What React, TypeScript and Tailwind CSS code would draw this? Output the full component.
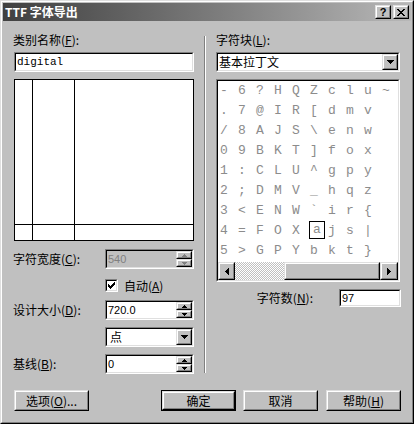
import React from "react";

const CJK = "font-['Noto_Sans_CJK_SC','Noto_Sans',sans-serif]";
const NUM = "font-['Liberation_Sans',Arial,sans-serif]";
const MONO = "font-['Liberation_Mono',monospace]";

function Pix({ rows, color = "#000" }: { rows: string[]; color?: string }) {
  const w = rows[0].length;
  const h = rows.length;
  return (
    <svg width={w} height={h} shapeRendering="crispEdges" className="block">
      {rows.flatMap((r, y) =>
        r.split("").map((c, x) =>
          c === "X" ? <rect key={`${x}-${y}`} x={x} y={y} width={1} height={1} fill={color} /> : null
        )
      )}
    </svg>
  );
}

const UP = ["..X..", ".XXX.", "XXXXX"];
const DOWN = ["XXXXX", ".XXX.", "..X.."];
const DDOWN = ["XXXXXXX", ".XXXXX.", "..XXX..", "...X..."];
const LEFT = ["...X", "..XX", ".XXX", "XXXX", ".XXX", "..XX", "...X"];
const RIGHT = ["X...", "XX..", "XXX.", "XXXX", "XXX.", "XX..", "X..."];
const CHECK = [
  "......X",
  ".....XX",
  "X...XXX",
  "XX.XXX.",
  "XXXXX..",
  ".XXX...",
  "..X....",
];
const CLOSE = [
  "XX....XX",
  ".XX..XX.",
  "..XXXX..",
  "...XX...",
  "..XXXX..",
  ".XX..XX.",
  "XX....XX",
];

function Sunken({
  className = "",
  inner = "",
  children,
}: {
  className?: string;
  inner?: string;
  children?: React.ReactNode;
}) {
  return (
    <div
      className={`border border-t-[#808080] border-l-[#808080] border-b-white border-r-white ${className}`}
    >
      <div
        className={`h-full w-full border border-t-black border-l-black border-b-[#dfdfdf] border-r-[#dfdfdf] ${inner}`}
      >
        {children}
      </div>
    </div>
  );
}

function Raised({
  className = "",
  children,
}: {
  className?: string;
  children?: React.ReactNode;
}) {
  return (
    <div
      className={`border border-t-[#dfdfdf] border-l-[#dfdfdf] border-b-black border-r-black bg-[#c0c0c0] ${className}`}
    >
      <div className="flex h-full w-full items-center justify-center border border-t-white border-l-white border-b-[#808080] border-r-[#808080]">
        {children}
      </div>
    </div>
  );
}

function Spin({ disabled = false }: { disabled?: boolean }) {
  const c = disabled ? "#808080" : "#000";
  return (
    <div className="flex h-full w-[16px] shrink-0 flex-col">
      <Raised className="h-[8px] w-full">
        <Pix rows={UP} color={c} />
      </Raised>
      <Raised className="h-[8px] w-full">
        <Pix rows={DOWN} color={c} />
      </Raised>
    </div>
  );
}

function Label({ children, className = "" }: { children: React.ReactNode; className?: string }) {
  return <div className={`whitespace-nowrap text-[12px] leading-[14px] text-black ${className}`}>{children}</div>;
}

function Btn({
  children,
  className = "",
  def = false,
}: {
  children: React.ReactNode;
  className?: string;
  def?: boolean;
}) {
  if (def) {
    return (
      <div className={`h-[21px] w-[75px] border border-black ${className}`}>
        <Raised className="h-full w-full">
          <span className="text-[12px] leading-[14px]">{children}</span>
        </Raised>
      </div>
    );
  }
  return (
    <Raised className={`h-[21px] w-[75px] ${className}`}>
      <span className="text-[12px] leading-[14px]">{children}</span>
    </Raised>
  );
}

const COLS = [
  "-./012345",
  "6789:;<=>",
  "?@ABCDEFG",
  "HIJKLMNOP",
  "QRSTUVWXY",
  "Z[\\]^_`ab",
  "cdefghijk",
  "lmnopqrst",
  "uvwxyz{|}",
  "~",
];

export default function App() {
  const cells: React.ReactNode[] = [];
  for (let c = 0; c < 10; c++) {
    for (let r = 0; r < 9; r++) {
      const ch = COLS[c][r] ?? "";
      const sel = c === 5 && r === 7;
      cells.push(
        <div key={`${c}-${r}`} className="relative h-[20px] w-[18px]">
          {sel ? (
            <div className="flex h-[18px] w-[16px] items-center justify-center border border-black">
              <span className={`${MONO} text-[13px] leading-[16px] text-[#8c8c8c]`}>{ch}</span>
            </div>
          ) : (
            <div className={`flex h-[20px] items-center pl-[1px] ${MONO} text-[13px] leading-[20px] text-[#8c8c8c]`}>
              {ch}
            </div>
          )}
        </div>
      );
    }
  }

  return (
    <div className={`h-[424px] w-[414px] ${CJK}`}>
      <div className="h-[424px] w-[414px] border border-t-[#dfdfdf] border-l-[#dfdfdf] border-b-black border-r-black bg-[#c0c0c0]">
        <div className="flex h-full w-full flex-col border border-t-white border-l-white border-b-[#808080] border-r-[#808080] p-px">
          {/* Title bar */}
          <div className="flex h-[18px] w-full shrink-0 items-center bg-gradient-to-r from-[#404040] to-[#b8b8b8] pl-[2px] pr-[2px]">
            <span className="text-[12px] font-bold leading-[14px] text-white">TTF 字体导出</span>
            <div className="ml-auto flex items-center">
              <Raised className="h-[14px] w-[16px]">
                <span className={`${NUM} text-[11px] font-bold leading-[10px] text-black`}>?</span>
              </Raised>
              <Raised className="ml-[2px] h-[14px] w-[16px]">
                <Pix rows={CLOSE} />
              </Raised>
            </div>
          </div>

          {/* Body */}
          <div className="flex pl-[11px]">
            {/* Left column */}
            <div className="flex w-[180px] flex-col">
              <Label className="-ml-px mt-[12px] h-[14px]">
                类别名称(<u>F</u>):
              </Label>
              <Sunken className="mt-[5px] h-[20px] w-[180px]" inner="flex items-center bg-white pl-[1px]">
                <span className={`${MONO} text-[11px] leading-[14px] text-black`}>digital</span>
              </Sunken>
              <div className="mt-[7px] h-[162px] w-[180px] border border-black bg-white">
                <svg width="178" height="160" shapeRendering="crispEdges" className="block">
                  <rect x={17} y={0} width={1} height={160} fill="#000" />
                  <rect x={59} y={0} width={1} height={160} fill="#000" />
                  <rect x={0} y={144} width={178} height={1} fill="#000" />
                </svg>
              </div>

              <div className="mt-[8px] flex h-[20px] items-center">
                <Label className="-ml-px w-[92px]">
                  字符宽度(<u>C</u>):
                </Label>
                <Sunken className="h-[20px] w-[89px]" inner="flex bg-[#c0c0c0]">
                  <div className={`flex flex-1 items-center pl-[1px] ${NUM} text-[11px] text-[#808080]`}>540</div>
                  <Spin disabled />
                </Sunken>
              </div>

              <div className="mt-[10px] flex h-[13px] items-center pl-[91px]">
                <Sunken className="h-[13px] w-[13px]" inner="flex items-center justify-center bg-white">
                  <Pix rows={CHECK} />
                </Sunken>
                <Label className="ml-[6px]">
                  自动(<u>A</u>)
                </Label>
              </div>

              <div className="mt-[8px] flex h-[20px] items-center">
                <Label className="-ml-px w-[92px]">
                  设计大小(<u>D</u>):
                </Label>
                <Sunken className="h-[20px] w-[89px]" inner="flex bg-white">
                  <div className={`flex flex-1 items-center pl-[1px] ${NUM} text-[11px] text-black`}>720.0</div>
                  <Spin />
                </Sunken>
              </div>

              <div className="mt-[7px] flex h-[20px] items-center pl-[91px]">
                <Sunken className="h-[20px] w-[89px]" inner="flex items-center bg-white">
                  <div className="flex-1 pl-[3px] text-[12px] leading-[14px] text-black">点</div>
                  <Raised className="h-[16px] w-[16px]">
                    <Pix rows={DDOWN} />
                  </Raised>
                </Sunken>
              </div>

              <div className="mt-[7px] flex h-[20px] items-center">
                <Label className="-ml-px w-[92px]">
                  基线(<u>B</u>):
                </Label>
                <Sunken className="h-[20px] w-[89px]" inner="flex bg-white">
                  <div className={`flex flex-1 items-center pl-[1px] ${NUM} text-[11px] text-black`}>0</div>
                  <Spin />
                </Sunken>
              </div>
            </div>

            {/* Separator */}
            <div className="ml-[10px] mt-[15px] flex h-[337px] w-[2px]">
              <div className="h-full w-px bg-[#808080]" />
              <div className="h-full w-px bg-white" />
            </div>

            {/* Right column */}
            <div className="ml-[10px] flex w-[185px] flex-col">
              <Label className="mt-[12px] h-[14px]">
                字符块(<u>L</u>):
              </Label>
              <Sunken className="mt-[5px] h-[20px] w-[184px]" inner="flex items-center bg-white">
                <div className="flex-1 pl-[1px] text-[12px] leading-[14px] text-black">基本拉丁文</div>
                <Raised className="h-[16px] w-[16px]">
                  <Pix rows={DDOWN} />
                </Raised>
              </Sunken>

              <Sunken className="mt-[7px] h-[203px] w-[184px]" inner="flex flex-col bg-white">
                <div className="grid h-[181px] grid-flow-col grid-cols-[repeat(10,18px)] grid-rows-[repeat(9,20px)] pl-[1px]">
                  {cells}
                </div>
                <div className="flex h-[18px]">
                  <Raised className="h-[18px] w-[17px]">
                    <Pix rows={LEFT} />
                  </Raised>
                  <div className="h-[18px] w-[49px] bg-[repeating-conic-gradient(#ffffff_0_25%,#c0c0c0_0_50%)] [background-size:2px_2px]" />
                  <Raised className="h-[18px] flex-1" />
                  <Raised className="h-[18px] w-[18px]">
                    <Pix rows={RIGHT} />
                  </Raised>
                </div>
              </Sunken>

              <div className="mt-[7px] flex h-[18px] items-center justify-end">
                <Label className="mr-[26px]">
                  字符数(<u>N</u>):
                </Label>
                <Sunken className="h-[18px] w-[62px]" inner="flex items-center bg-white pl-[1px]">
                  <span className={`${NUM} text-[11px] leading-[14px] text-black`}>97</span>
                </Sunken>
              </div>
            </div>
          </div>

          {/* Buttons */}
          <div className="mt-[16px] flex h-[21px] pl-[11px]">
            <Btn>
              选项(<u>O</u>)...
            </Btn>
            <Btn def className="ml-[72px]">
              确定
            </Btn>
            <Btn className="ml-[7px]">取消</Btn>
            <Btn className="ml-[8px]">
              帮助(<u>H</u>)
            </Btn>
          </div>
        </div>
      </div>
    </div>
  );
}
